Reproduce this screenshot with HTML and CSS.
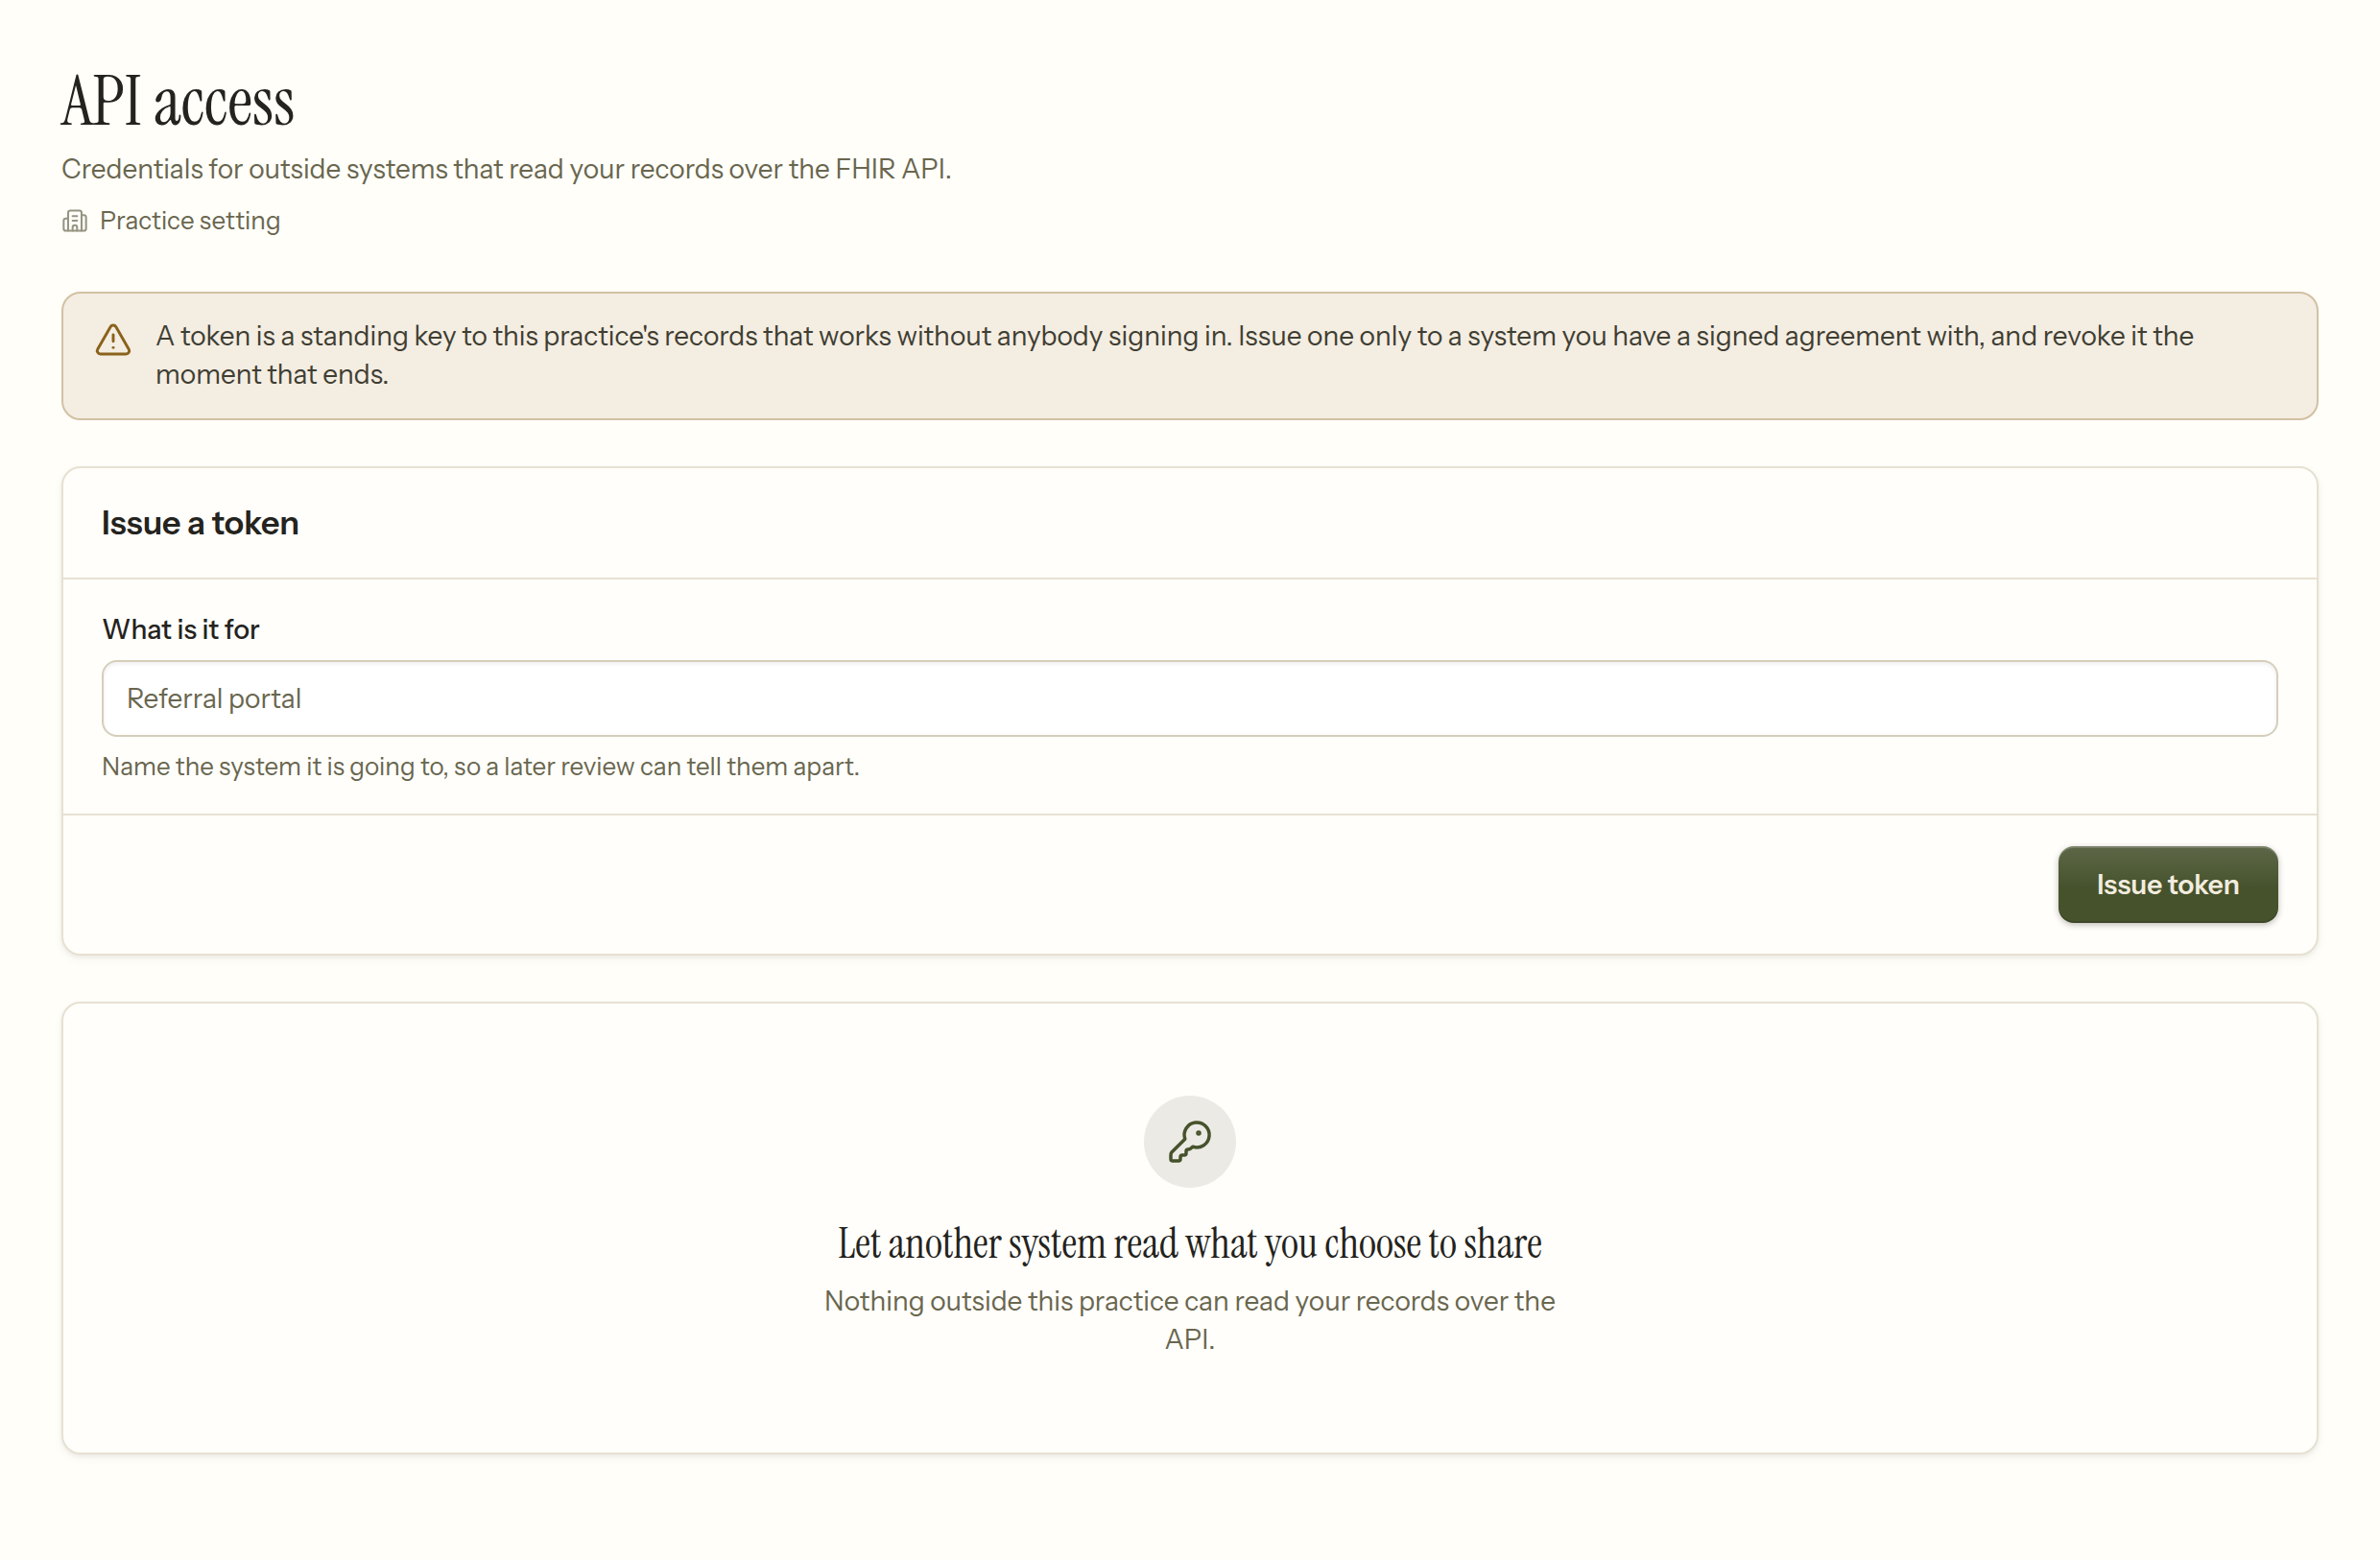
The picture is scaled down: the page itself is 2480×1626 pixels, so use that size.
FILE: index.html
```
<!DOCTYPE html>
<html lang="en">
<head>
    <meta charset="UTF-8">
    <meta name="viewport" content="width=device-width, initial-scale=1.0">
    <title>API access</title>
    <link rel="stylesheet" href="styles.css">
</head>
<body>
    <main class="page">
        <header class="page-header">
            <h1>API access</h1>
            <p class="subtitle">Credentials for outside systems that read your records over the FHIR API.</p>
            <p class="scope">
                <svg class="scope-icon" viewBox="0 0 24 24" aria-hidden="true">
                    <path d="M10 12h4"/>
                    <path d="M10 8h4"/>
                    <path d="M14 21v-3a2 2 0 0 0-4 0v3"/>
                    <path d="M6 10H4a2 2 0 0 0-2 2v7a2 2 0 0 0 2 2h16a2 2 0 0 0 2-2V9a2 2 0 0 0-2-2h-2"/>
                    <path d="M6 21V5a2 2 0 0 1 2-2h8a2 2 0 0 1 2 2v16"/>
                </svg>
                Practice setting
            </p>
        </header>

        <!-- Warning shown above the form -->
        <div class="notice" role="note">
            <svg class="notice-icon" viewBox="0 0 24 24" aria-hidden="true">
                <path d="m21.73 18-8-14a2 2 0 0 0-3.48 0l-8 14A2 2 0 0 0 4 21h16a2 2 0 0 0 1.73-3"/>
                <path d="M12 9v4"/>
                <path d="M12 17h.01"/>
            </svg>
            <p>A token is a standing key to this practice's records that works without anybody signing in. Issue one only to a system you have a signed agreement with, and revoke it the moment that ends.</p>
        </div>

        <!-- Issue form -->
        <form class="card">
            <div class="card-header">
                <h2>Issue a token</h2>
            </div>
            <div class="card-body">
                <label for="tokenName">What is it for</label>
                <input type="text" id="tokenName" name="tokenName" placeholder="Referral portal" aria-describedby="tokenHint">
                <p class="hint" id="tokenHint">Name the system it is going to, so a later review can tell them apart.</p>
            </div>
            <div class="card-footer">
                <button type="button">Issue token</button>
            </div>
        </form>

        <!-- Empty state -->
        <section class="card empty">
            <div class="empty-icon">
                <svg viewBox="0 0 24 24" aria-hidden="true">
                    <path d="M2.586 17.414A2 2 0 0 0 2 18.828V21a1 1 0 0 0 1 1h3a1 1 0 0 0 1-1v-1a1 1 0 0 1 1-1h1a1 1 0 0 0 1-1v-1a1 1 0 0 1 1-1h.172a2 2 0 0 0 1.414-.586l.814-.814a6.5 6.5 0 1 0-4-4z"/>
                    <circle cx="16.5" cy="7.5" r=".5" fill="currentColor"/>
                </svg>
            </div>
            <h3>Let another system read what you choose to share</h3>
            <p>Nothing outside this practice can read your records over the API.</p>
        </section>
    </main>
</body>
</html>
```

FILE: styles.css
```
/* API access page */
* {
    box-sizing: border-box;
}

body {
    margin: 0;
    background-color: #fffef9;
    color: #24231d;
    font-family: "Instrument Sans", "Liberation Sans", Arial, sans-serif;
    font-size: 28px;
    line-height: 40px;
}

h1, h2, h3, p {
    margin: 0;
}

svg {
    flex: none;
    fill: none;
    stroke: currentColor;
    stroke-width: 1.75;
    stroke-linecap: round;
    stroke-linejoin: round;
}

.page {
    display: flex;
    flex-direction: column;
    gap: 48px;
    padding: 64px;
}

/* Header */
.page-header {
    padding-bottom: 8px;
}

h1 {
    margin-bottom: 8px;
    font-family: "Instrument Serif", "Liberation Serif", serif;
    font-size: 72px;
    font-weight: 400;
    line-height: 84px;
}

.subtitle {
    color: #69664f;
}

.scope {
    display: flex;
    align-items: center;
    gap: 12px;
    margin-top: 16px;
    color: #69664f;
    font-size: 26px;
    line-height: 36px;
}

.scope-icon {
    width: 28px;
    height: 28px;
    color: #969482;
}

/* Notice */
.notice {
    display: flex;
    gap: 24px;
    padding: 24px 32px 26px;
    border: 2px solid #d2c1a3;
    border-radius: 20px;
    background-color: #f4ede2;
    color: #3f3e32;
}

.notice-icon {
    width: 40px;
    height: 40px;
    margin-top: 4px;
    color: #8a621b;
}

/* Cards */
.card {
    border: 2px solid #e7e1d3;
    border-radius: 20px;
    background-color: #fffefa;
    box-shadow: 0 2px 4px rgba(36, 35, 29, 0.06), 0 4px 12px rgba(36, 35, 29, 0.04);
}

.card-header {
    padding: 32px 40px;
    border-bottom: 2px solid #e7e1d3;
}

h2 {
    font-size: 34px;
    font-weight: 600;
    line-height: 50px;
}

.card-body {
    display: flex;
    flex-direction: column;
    gap: 12px;
    padding: 32px 40px 30px;
}

label {
    font-weight: 500;
}

input {
    width: 100%;
    height: 80px;
    padding: 0 24px;
    border: 2px solid #d5cebb;
    border-radius: 16px;
    background-color: #fff;
    box-shadow: inset 0 2px 4px rgba(36, 35, 60, 0.07);
    color: #24231d;
    font: inherit;
}

input::placeholder {
    color: #69664f;
    opacity: 1;
}

.hint {
    color: #69664f;
    font-size: 26px;
    line-height: 38px;
}

.card-footer {
    display: flex;
    justify-content: flex-end;
    padding: 32px 40px;
    border-top: 2px solid #e7e1d3;
}

button {
    height: 80px;
    padding: 0 40px;
    border: none;
    border-radius: 16px;
    background: linear-gradient(to bottom, #5d6748, #46522c 55%);
    box-shadow: inset 0 2px 0 rgba(255, 255, 255, 0.18), inset 0 -2px 0 rgba(36, 35, 29, 0.25), 0 2px 6px rgba(36, 35, 29, 0.3);
    color: #f2ecdf;
    font: inherit;
    font-weight: 600;
    cursor: pointer;
}

/* Empty state */
.empty {
    display: flex;
    flex-direction: column;
    align-items: center;
    padding: 96px 40px 98px;
    text-align: center;
}

.empty-icon {
    display: flex;
    align-items: center;
    justify-content: center;
    width: 96px;
    height: 96px;
    border-radius: 50%;
    background-color: #ebeae4;
    color: #46522c;
}

.empty-icon svg {
    width: 48px;
    height: 48px;
}

h3 {
    margin: 32px 0 14px;
    font-family: "Instrument Serif", "Liberation Serif", serif;
    font-size: 44px;
    font-weight: 400;
    line-height: 52px;
}

.empty p {
    max-width: 768px;
    color: #69664f;
}
```
